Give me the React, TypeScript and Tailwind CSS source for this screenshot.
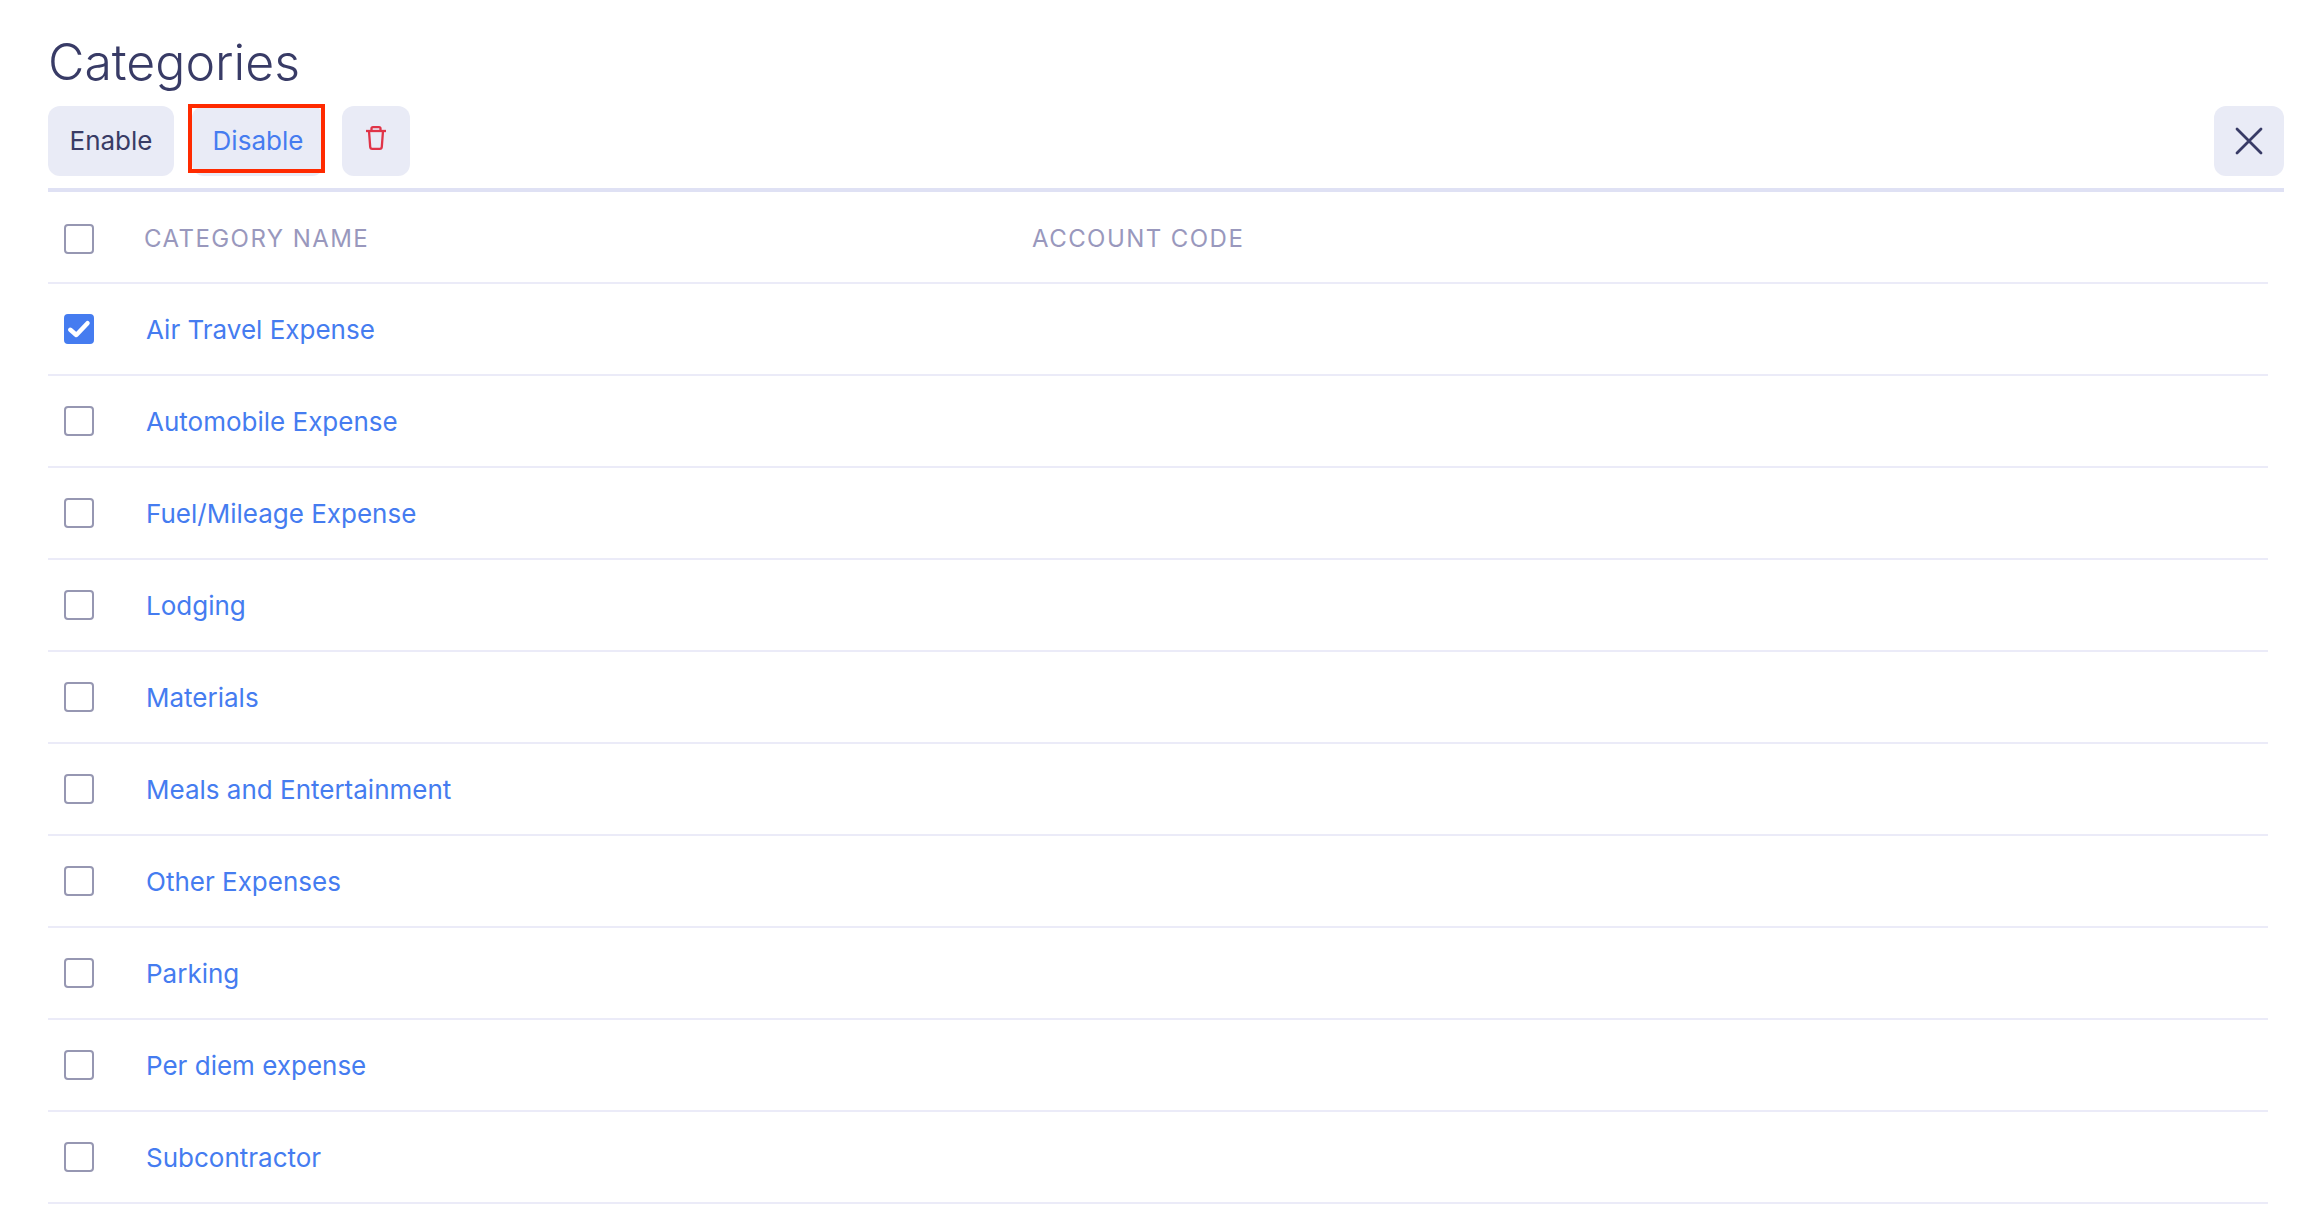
import React, { useState } from 'react';

const categories = [
  'Air Travel Expense',
  'Automobile Expense',
  'Fuel/Mileage Expense',
  'Lodging',
  'Materials',
  'Meals and Entertainment',
  'Other Expenses',
  'Parking',
  'Per diem expense',
  'Subcontractor',
];

const TrashIcon: React.FC = () => (
  <svg width="20" height="24" viewBox="0 0 20 24" fill="none" stroke="#e03448" strokeWidth="2.3" strokeLinejoin="round" aria-hidden="true">
    <path d="M0 5h20" />
    <path d="M5.5 5V2.600Q5.500 1.200 7 1.200h6q1.500 0 1.500 1.400V5" />
    <path d="M3 5l1.200 15.800q.15 2 2 2h7.600q1.850 0 2-2L17 5" />
  </svg>
);

const CloseIcon: React.FC = () => (
  <svg width="28" height="28" viewBox="0 0 28 28" fill="none" stroke="#383b66" strokeWidth="2.8" strokeLinecap="round" aria-hidden="true">
    <path d="M2 2l24 24M26 2L2 26" />
  </svg>
);

interface CheckboxProps {
  label: string;
  checked: boolean;
  onChange: () => void;
}

const Checkbox: React.FC<CheckboxProps> = ({ label, checked, onChange }) => (
  <span className="relative block size-[30px]">
    <input
      type="checkbox"
      aria-label={label}
      checked={checked}
      onChange={onChange}
      className="block size-[30px] appearance-none rounded border-2 border-[#9697b2] bg-white checked:border-[#457cf0] checked:bg-[#457cf0]"
    />
    {checked && (
      <svg className="pointer-events-none absolute inset-0" width="30" height="30" viewBox="0 0 30 30" fill="none" stroke="#fff" strokeWidth="4.5" strokeLinecap="round" strokeLinejoin="round" aria-hidden="true">
        <path d="M6.3 15.8l6 5.2L23.500 9.200" />
      </svg>
    )}
  </span>
);

const App: React.FC = () => {
  const [selected, setSelected] = useState<string[]>(['Air Travel Expense']);

  const toggle = (name: string) => {
    setSelected(selected.includes(name) ? selected.filter((n) => n !== name) : [...selected, name]);
  };

  const allSelected = selected.length === categories.length;

  return (
    <main className="bg-white pt-8 pr-[34px] pl-12 pb-3 font-['Inter',sans-serif] text-[26px] text-[#383b66]">
      <h1 className="text-[50px] leading-[60px] font-light">Categories</h1>

      {/* Toolbar */}
      <div className="mt-[14px] flex items-center gap-[18px] border-b-4 border-[#dfe1f4] pb-3">
        <button type="button" className="h-[70px] w-[126px] rounded-xl bg-[#e9ebf6] pb-0.5">
          Enable
        </button>
        <div className="relative">
          <button type="button" className="h-[70px] w-[132px] rounded-xl bg-[#e9ebf6] pb-0.5 text-[#457cf0]">
            Disable
          </button>
          <span className="pointer-events-none absolute -top-0.5 -right-px bottom-[3px] -left-1 border-4 border-[#ff2a00]" />
        </div>
        <button type="button" aria-label="Delete" className="flex h-[70px] w-[68px] items-center justify-center rounded-xl bg-[#e9ebf6] pb-1.5">
          <TrashIcon />
        </button>
        <button type="button" aria-label="Close" className="ml-auto flex size-[70px] items-center justify-center rounded-xl bg-[#e9ebf6]">
          <CloseIcon />
        </button>
      </div>

      {/* Category list */}
      <div className="pr-4">
        <table className="w-full table-fixed border-separate border-spacing-0 text-left">
          <thead>
            <tr className="h-[92px] text-2xl text-[#9998bd]">
              <th className="w-24 border-b-2 border-[#ebebf8] pt-1 pl-4">
                <Checkbox
                  label="Select all categories"
                  checked={allSelected}
                  onChange={() => setSelected(allSelected ? [] : categories)}
                />
              </th>
              <th className="w-2/5 border-b-2 border-[#ebebf8] pt-1 font-normal tracking-[0.06em] uppercase">Category name</th>
              <th className="border-b-2 border-[#ebebf8] pt-1 font-normal tracking-[0.06em] uppercase">Account code</th>
            </tr>
          </thead>
          <tbody>
            {categories.map((name) => (
              <tr key={name} className="h-[92px]">
                <td className="border-b-2 border-[#ebebf8] pl-4">
                  <Checkbox label={name} checked={selected.includes(name)} onChange={() => toggle(name)} />
                </td>
                <td className="border-b-2 border-[#ebebf8] pl-0.5">
                  <a href="#" className="text-[#457cf0]">
                    {name}
                  </a>
                </td>
                <td className="border-b-2 border-[#ebebf8]" />
              </tr>
            ))}
          </tbody>
        </table>
      </div>
    </main>
  );
};

export default App;
